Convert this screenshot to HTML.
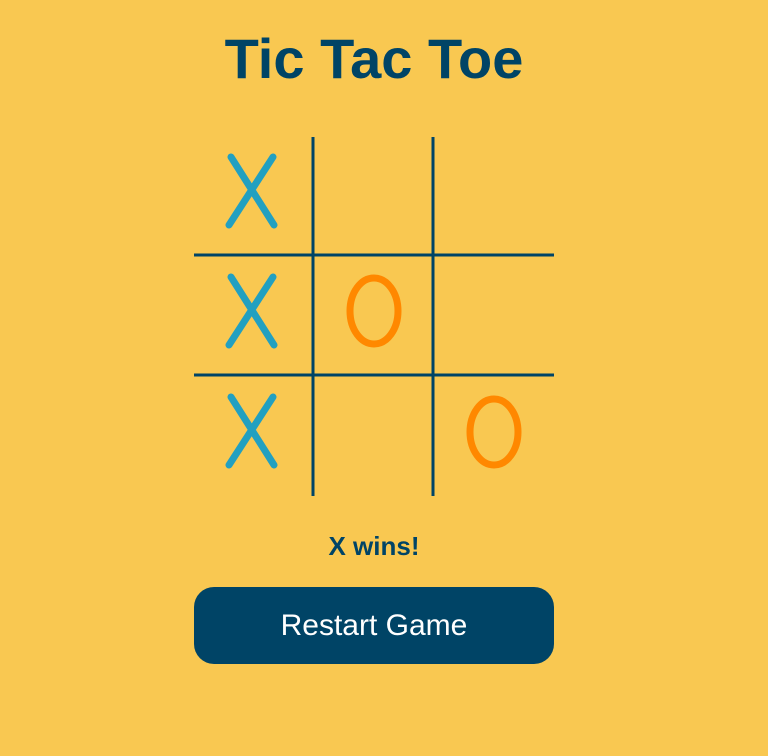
<!DOCTYPE html>
<html><head><style>
html,body{margin:0;padding:0;background:#F9C851;width:768px;height:756px;overflow:hidden;font-family:"Liberation Sans",sans-serif;}
h1{position:absolute;left:0;width:748px;top:26px;margin:0;text-align:center;font-size:56px;font-weight:bold;color:#004466;}
.msg{position:absolute;left:0;width:748px;top:531px;text-align:center;font-size:26px;font-weight:bold;color:#004466;}
.btn{position:absolute;left:194px;top:587px;width:360px;height:77px;border-radius:20px;background:#004466;color:#fff;font-size:30px;line-height:77px;text-align:center;}
svg{position:absolute;left:0;top:0}
</style></head><body>
<h1>Tic Tac Toe</h1>
<svg width="768" height="756">
<g stroke="#004466" stroke-width="3">
<line x1="313" y1="137" x2="313" y2="496"/><line x1="433" y1="137" x2="433" y2="496"/>
<line x1="194" y1="255" x2="554" y2="255"/><line x1="194" y1="375" x2="554" y2="375"/>
</g>
<g stroke="#22A0C0" stroke-width="7" stroke-linecap="round" fill="none">
<path d="M231 157L274 225M273 157L229 225"/>
<path d="M231 277L274 345M273 277L229 345"/>
<path d="M231 397L274 465M273 397L229 465"/>
</g>
<g stroke="#FF8800" stroke-width="7" fill="none">
<ellipse cx="374" cy="311" rx="24" ry="33"/>
<ellipse cx="494" cy="432" rx="24" ry="33"/>
</g>
</svg>
<div class="msg">X wins!</div>
<div class="btn">Restart Game</div>
</body></html>
